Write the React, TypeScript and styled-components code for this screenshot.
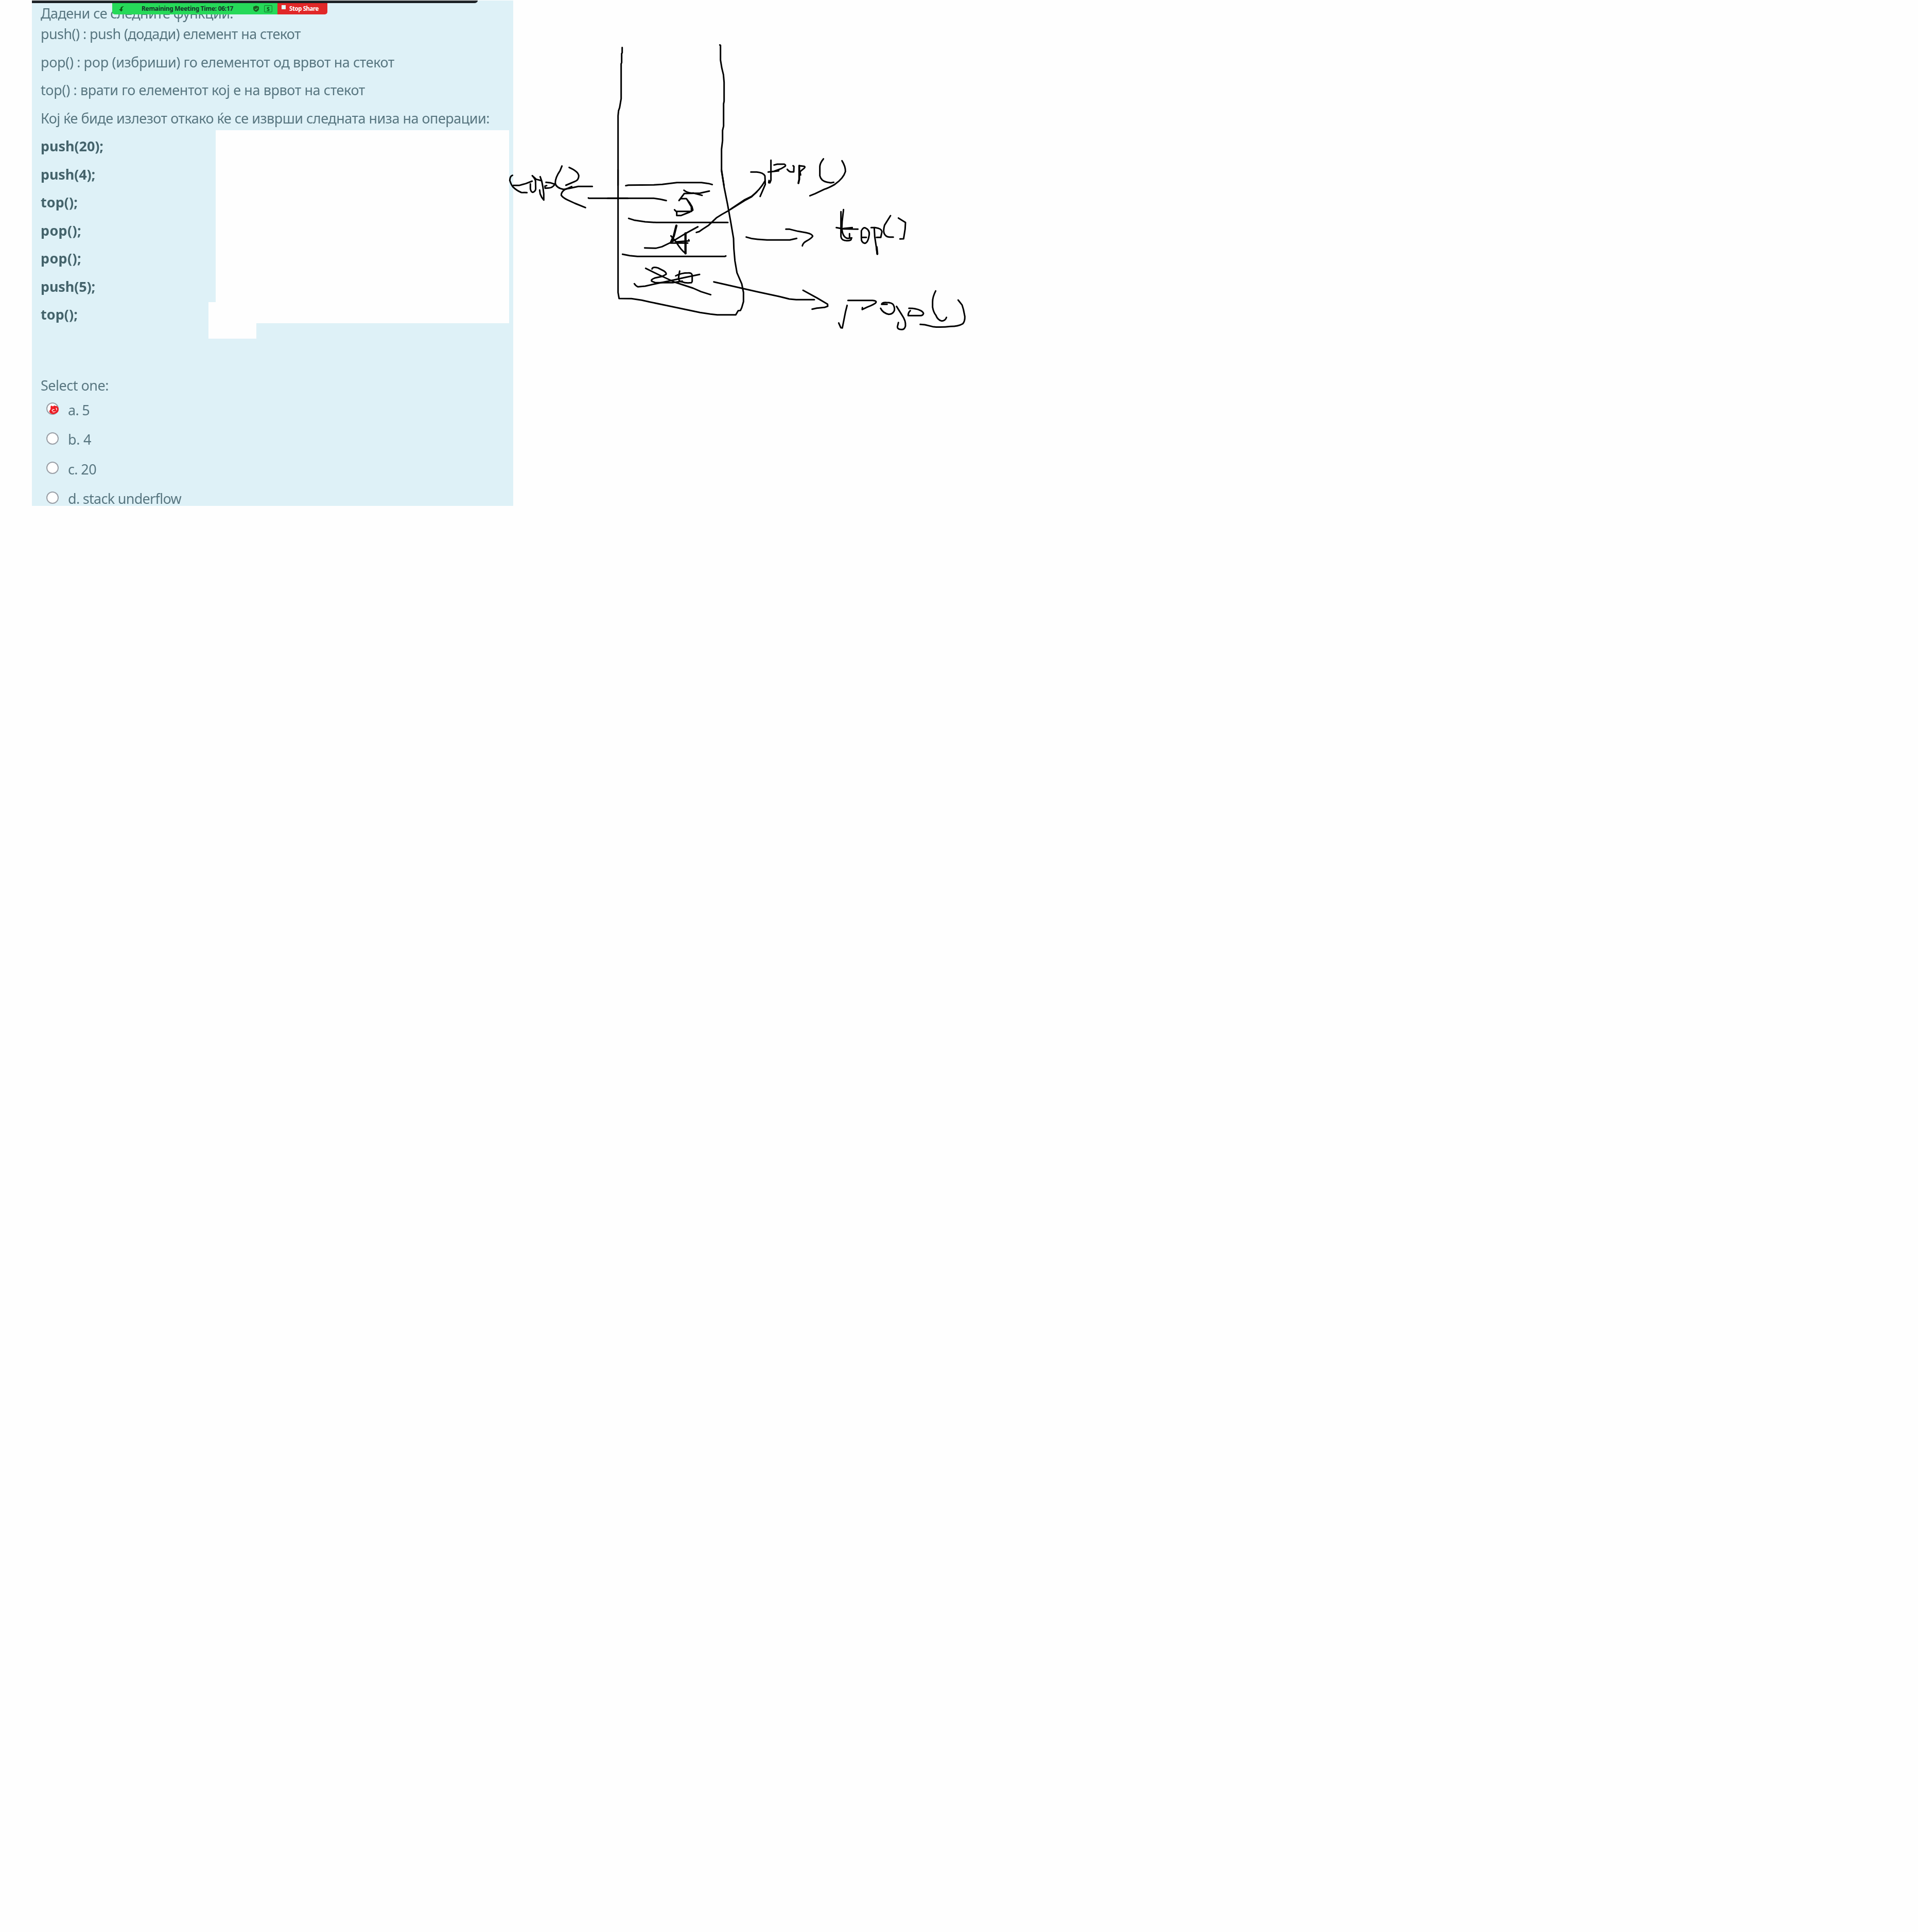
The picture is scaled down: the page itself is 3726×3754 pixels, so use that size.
import React, { useLayoutEffect, useRef, useState } from 'react';
import styled, { createGlobalStyle } from 'styled-components';

const GlobalStyle = createGlobalStyle`
  html, body { margin: 0; padding: 0; background: #ffffff; }
  body { font-family: "Noto Sans", "Open Sans", sans-serif; }
`;

const Board = styled.main`
  position: relative;
  width: 3726px;
  height: 3754px;
  box-sizing: border-box;
  padding: 1px 0 0 62px;
  background: #fefefe;
  overflow: hidden;
`;

const Panel = styled.section`
  position: relative;
  width: 935px;
  height: 982px;
  box-sizing: border-box;
  padding: 10.5px 0 0 17px;
  overflow: hidden;
  background: #def1f7;
  color: #587680;
  display: flex;
  flex-direction: column;
`;

const Line = styled.p<{ $height: number; $bold?: boolean; $gap?: number }>`
  margin: ${(p) => p.$gap ?? 0}px 0 0;
  flex: none;
  height: ${(p) => p.$height}px;
  line-height: ${(p) => p.$height}px;
  font-size: 27px;
  font-weight: ${(p) => (p.$bold ? 700 : 400)};
  color: ${(p) => (p.$bold ? '#44636b' : 'inherit')};
  white-space: nowrap;
  filter: blur(0.45px);
`;

const Options = styled.ul`
  list-style: none;
  margin: 0;
  padding: 0 0 0 11px;
`;

const Option = styled.li`
  display: flex;
  align-items: center;
  gap: 18px;
  height: 57.5px;
  line-height: 57.5px;
  font-size: 27px;
  white-space: nowrap;
  filter: blur(0.45px);
`;

const Radio = styled.span`
  box-sizing: border-box;
  width: 24px;
  height: 24px;
  margin-bottom: 4px;
  border: 2px solid #9a9fa6;
  border-radius: 50%;
  background: #ffffff;
`;

const Span = styled.span`
  display: inline-block;
`;

const Patch = styled.div<{ $x: number; $y: number; $w: number; $h: number }>`
  position: absolute;
  left: ${(p) => p.$x}px;
  top: ${(p) => p.$y}px;
  width: ${(p) => p.$w}px;
  height: ${(p) => p.$h}px;
  background: #fefefe;
`;

const ShareOverlay = styled.div`
  position: absolute;
  left: 62px;
  top: 1px;
  width: 866px;
`;

const DarkEdge = styled.div`
  box-sizing: border-box;
  height: 5px;
  background: #1f2428;
  border-bottom: 1px solid #11151a;
  border-bottom-right-radius: 6px 5px;
`;

const ShareBar = styled.div`
  display: flex;
  margin-left: 156px;
  width: 418px;
  height: 22px;
  border-radius: 0 0 5px 5px;
  overflow: hidden;
  font-size: 12px;
  font-weight: 700;
  line-height: 22px;
  white-space: nowrap;
`;

const TimeBar = styled.div`
  box-sizing: border-box;
  display: flex;
  align-items: center;
  width: 321px;
  padding-left: 13px;
  background: #26d959;
  color: #17352a;
`;

const TimeText = styled.div`
  width: 178px;
  margin: 0 39px 0 34px;
`;

const ShieldBox = styled.div`
  display: flex;
  margin-right: 10px;
`;

const StopButton = styled.div`
  box-sizing: border-box;
  display: flex;
  width: 97px;
  padding-left: 8px;
  background: #e12828;
  color: #ffffff;
  font-size: 11.5px;
  line-height: 21px;
`;

const StopSquare = styled.span`
  width: 8px;
  height: 8px;
  margin: 4px 7px 0 0;
  background: #dffcff;
`;

const Ink = styled.svg`
  position: absolute;
  left: 0;
  top: 0;
  pointer-events: none;
`;

/* Text spread to a given width by its letter spacing. */
function Fit({ width, children }: { width: number; children: string }) {
  const ref = useRef<HTMLSpanElement>(null);
  const [spacing, setSpacing] = useState(0);
  useLayoutEffect(() => {
    const natural = ref.current!.getBoundingClientRect().width;
    setSpacing((width - natural) / children.length);
  }, [width, children]);
  return (
    <Span ref={ref} style={{ letterSpacing: spacing }}>
      {children}
    </Span>
  );
}

const intro: [string, number][] = [
  ['push() : push (додади) елемент на стекот', 505],
  ['pop() : pop (избриши) го елементот од врвот на стекот', 687],
  ['top() : врати го елементот кој е на врвот на стекот', 630],
  ['Кој ќе биде излезот откако ќе се изврши следната низа на операции:', 872],
];

const operations: [string, number][] = [
  ['push(20);', 122],
  ['push(4);', 106],
  ['top();', 72],
  ['pop();', 79],
  ['pop();', 79],
  ['push(5);', 106],
  ['top();', 72],
];

const answers: [string, number][] = [
  ['a. 5', 42],
  ['b. 4', 45],
  ['c. 20', 55],
  ['d. stack underflow', 220],
];

type Stroke = string | [string, number];

/* Pen strokes, drawn on a grid three times finer than the page. */
const sketches: { x: number; y: number; strokes: Stroke[] }[] = [
  {
    x: 960,
    y: 280,
    strokes: [
      'M107 182 Q92 186 91 212 Q100 240 110 250 Q130 270 158 282 L191 283',
      'M111 241 L145 241 L185 230 L221 216',
      'M211 232 L211 260 Q214 280 226 281 Q240 276 242 262 L241 215 Q238 200 222 184 L245 205 L275 213',
      'M268 190 L277 215 L284 250 L289 290 L289 326 L277 310 L268 290 L265 268',
      'M302 223 L330 226 L354 234 Q340 255 318 256 L297 257 L296 245 L306 242',
      'M395 128 L384 155 Q356 195 356 228 Q360 255 405 264 L435 259 L490 247 L572 247',
      'M437 136 Q492 160 493 186 Q492 210 470 218 L418 240',
      'M452 248 L410 266 Q390 280 391 298 Q400 312 427 325 L470 345 L532 370',
      'M549 314 L553 316 L780 316',
    ],
  },
  {
    x: 1180,
    y: 60,
    strokes: [
      'M86 97 L86 128 L83 132 L83 185 L80 192 L80 395 L71 448 L65 465 L62 495 L62 900',
      'M655 82 L659 84 L659 170 L667 218 L676 255 L680 300 L680 410 L677 425 L677 555 L671 580 L671 640 L665 690 L665 815 L679 900',
    ],
  },
  {
    x: 1180,
    y: 330,
    strokes: [
      'M62 0 L62 715 L68 750 L140 751 L200 760 L250 771 L340 790 L440 811 L540 832 L600 841 L640 845 L748 845 L762 821 L775 820 L783 803 L793 768 L793 715 L783 665 L755 600 L743 530 L737 460 L735 400 L718 300 L700 200 L680 100 L665 0',
      'M107 92 L122 89 L270 88 L320 85 L405 74 L548 74 L590 80 L611 86',
      'M0 166 L270 166 L310 172 L343 179',
      'M446 119 Q470 138 500 135 L552 149',
      'M594 124 L540 136 L448 138 L417 179 L427 168 L460 168 Q480 190 493 215 L498 235 L480 246 L430 266 L404 266 L404 242 L490 242 L489 215 L462 170',
      'M391 233 L404 246',
      'M124 283 L155 293 L220 303 L285 307 L702 307',
      ['M402 325 L387 385 L371 421', 13],
      'M370 385 L400 420 Q430 470 456 487',
      'M217 455 L282 457 L318 448 L370 423 L450 374 L527 332',
      'M368 427 L468 427 M400 420 L476 414 L474 408',
      ['M455 370 L455 487', 13],
      'M88 492 L130 500 L175 505 L684 505 L690 502',
      'M518 365 L535 360 L555 346 L590 323 L635 280 L665 261 L702 240 L760 204 L807 175 L840 157 L871 128',
      'M260 578 Q262 563 295 572 L330 590 Q345 600 342 609 L320 621 L275 631 Q252 640 258 649 L280 658 L380 658 L436 649',
      'M223 574 L300 612 L390 654 L500 690 L545 710 L602 728',
      'M157 664 Q165 677 178 682 L220 678 L290 662 L370 646 L450 628 L537 610',
      'M421 590 L416 620 Q410 650 435 653 Q455 662 490 658 L494 650 L494 614 Q490 600 472 601 Q430 601 398 618',
      'M620 653 L680 667 L782 690 L871 710 L1000 738 L1060 753 L1100 757 L1206 757',
    ],
  },
  {
    x: 1420,
    y: 280,
    strokes: [
      'M116 163 L150 163 Q187 166 198 185 L200 235 L183 275 L170 305',
      'M0 378 L77 326 L120 305 Q170 265 198 215',
      'M233 94 L233 210 L227 226 L220 225 L222 212',
      'M251 122 L270 117 L311 117 Q322 122 315 130 L295 142 L250 159 L217 163 L278 156',
      'M328 147 Q340 163 352 162 L366 162 L367 130 L362 126',
      ['M398 126 L398 205 L393 228', 11],
      'M398 126 L428 130 Q435 134 425 142 L402 161 L406 180',
      'M539 86 Q519 110 518 130 L518 185 Q525 215 560 222 L582 226 L599 223',
      'M647 97 Q668 130 667 160 Q655 200 605 235 Q570 255 545 263 L490 289 L460 301',
      'M89 542 Q120 553 155 555 L210 559 L343 559 L383 550',
      'M320 496 L342 496 L390 508 L440 517 Q475 525 476 538 Q465 552 440 565 Q420 575 416 593',
    ],
  },
  {
    x: 1560,
    y: 400,
    strokes: [
      'M236 22 L228 90 L226 130 Q230 185 262 190 L284 187',
      'M221 34 L221 180 Q225 203 255 203 Q285 203 280 190 M271 162 L271 187',
      'M194 127 L235 134 L320 136 M235 132 L287 127',
      'M343 140 Q352 125 362 128 Q388 140 386 165 Q380 215 360 218 Q338 215 340 185 L340 145 M342 184 L369 184',
      'M397 127 L420 127 Q458 132 460 150 L453 184 L428 184',
      'M415 127 L418 180 L427 240 L433 282',
      ['M429 240 L433 280', 12],
      'M510 57 L475 113 Q465 150 475 165 Q485 182 505 182 L526 182',
      'M556 71 L597 97 L595 135 L586 192 L565 193',
      'M0 492 L80 536 L143 573 L144 585 L125 592 L80 596 L53 602',
      'M257 580 L247 620 L229 712 L220 710 L208 683',
      'M262 551 L405 551 Q430 553 425 563 Q420 572 375 590 L345 604 L346 593',
      'M490 574 L458 574 Q460 562 485 563 Q520 563 527 578 Q538 600 530 615 Q520 632 500 632 Q465 625 452 597',
      'M545 586 L577 637 Q600 670 597 700 Q592 722 573 721 Q550 720 550 705 L556 680',
      'M617 597 Q660 597 685 610 Q702 620 702 628 Q698 640 685 640 L613 640 Q612 623 625 611',
      'M773 496 Q755 530 755 560 L755 590 Q760 620 774 637 Q785 665 808 671 Q830 670 836 650',
      'M904 549 L927 578 L935 605 L943 645 Q944 675 930 688 Q905 703 860 703 Q800 710 755 704 L710 693 L683 691',
    ],
  },
];

export default function App() {
  return (
    <>
      <GlobalStyle />
      <Board>
        <Panel>
          <Line $height={27.6}>
            <Fit width={374}>Дадени се следните функции:</Fit>
          </Line>
          {intro.map(([text, width]) => (
            <Line key={text} $height={54.5}>
              <Fit width={width}>{text}</Fit>
            </Line>
          ))}
          {operations.map(([text, width], i) => (
            <Line key={i} $height={54.5} $bold>
              <Fit width={width}>{text}</Fit>
            </Line>
          ))}
          <Line $height={37.4} $gap={91.6}>
            <Fit width={132}>Select one:</Fit>
          </Line>
          <Options>
            {answers.map(([text, width]) => (
              <Option key={text}>
                <Radio />
                <Fit width={width}>{text}</Fit>
              </Option>
            ))}
          </Options>
        </Panel>
        <Patch $x={419} $y={253} $w={570} $h={375} />
        <Patch $x={405} $y={587} $w={93} $h={71} />
        <ShareOverlay>
          <DarkEdge />
          <ShareBar>
            <TimeBar>
              <svg width="10" height="11" viewBox="0 0 10 11">
                <path d="M10 0C6 0 2.6 2 3 6H0l4.5 4.6L8 6.500H6C5.600 4 7 1.500 10 0z" fill="#0b5a16" />
              </svg>
              <TimeText>
                <Fit width={178}>Remaining Meeting Time: 06:17</Fit>
              </TimeText>
              <ShieldBox>
                <svg width="11" height="12" viewBox="0 0 11 12">
                  <path d="M5.500 0L11 2v4c0 3-2.500 5-5.500 6C2.500 11 0 9 0 6V2z" fill="#1d5a20" />
                  <path d="M3 6l2 2 3.500-3.800" fill="none" stroke="#26d959" strokeWidth="1.400" />
                </svg>
              </ShieldBox>
              <svg width="16" height="14" viewBox="0 0 16 14">
                <rect x=".6" y=".6" width="14.800" height="12.800" rx="1.500" fill="none" stroke="#17852f" strokeWidth="1.200" />
                <text x="8" y="10.800" textAnchor="middle" fontSize="10.500" fontWeight="700" fill="#0f5c1c">$</text>
              </svg>
            </TimeBar>
            <StopButton>
              <StopSquare />
              <Fit width={57}>Stop Share</Fit>
            </StopButton>
          </ShareBar>
        </ShareOverlay>
        <Ink width="2000" height="1000" viewBox="0 0 2000 1000" fill="none" strokeLinecap="round" strokeLinejoin="round">
          {sketches.map((s) => (
            <g key={`${s.x}-${s.y}`} transform={`translate(${s.x} ${s.y}) scale(0.33333)`} stroke="#000000">
              {s.strokes.map((stroke, i) =>
                typeof stroke === 'string' ? (
                  <path key={i} d={stroke} strokeWidth={9} />
                ) : (
                  <path key={i} d={stroke[0]} strokeWidth={stroke[1]} />
                ),
              )}
            </g>
          ))}
          <g transform="translate(40 700) scale(0.33333)" stroke="#ed1c24">
            <path
              strokeWidth="10"
              d="M180 270 L180 285 L172 298 Q176 308 192 309 Q217 305 217 285 Q215 269 200 272 L197 269 L193 274 L180 272 M178 288 L184 283 M193 280 L200 278 L204 293 L192 294 M174 296 L182 300"
            />
          </g>
        </Ink>
      </Board>
    </>
  );
}
